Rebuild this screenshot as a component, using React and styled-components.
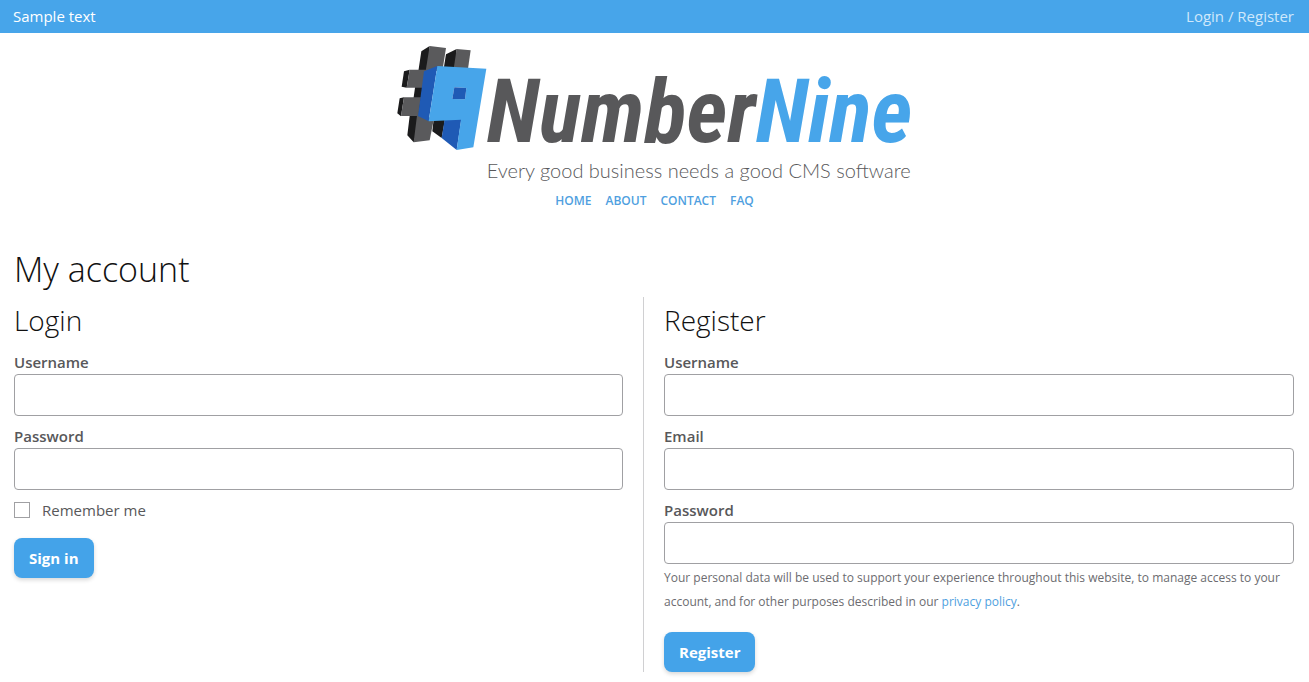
import React from "react";
import styled, { createGlobalStyle } from "styled-components";

const GlobalStyle = createGlobalStyle`
  *, *::before, *::after { box-sizing: border-box; }
  body {
    margin: 0;
    background: #fff;
    color: #58585a;
    font-family: "Open Sans", "Noto Sans", sans-serif;
    font-size: 15px;
    line-height: 24px;
  }
`;

const TopBar = styled.header`
  display: flex;
  justify-content: space-between;
  align-items: center;
  height: 33px;
  padding: 0 15px 2px 13px;
  background: #47a5ea;
  color: #fff;
`;

const AccountLink = styled.a`
  color: #cfe8fb;
  text-decoration: none;
`;

const Masthead = styled.div`
  display: flex;
  flex-direction: column;
  align-items: center;
  padding-top: 12px;
`;

const Logo = styled.a`
  display: flex;
  align-items: flex-start;
  color: #58585a;
  text-decoration: none;
`;

const LogoMark = styled.svg`
  width: 90px;
  height: 106px;
  flex: none;
`;

const LogoText = styled.span`
  display: flex;
  flex-direction: column;
  padding-top: 20px;
`;

const Wordmark = styled.span`
  font: italic 700 88px/94px "Roboto Condensed", "Liberation Sans Narrow", "Liberation Sans", sans-serif;
  white-space: nowrap;
`;

const Accent = styled.span`
  color: #47a5ea;
`;

const Tagline = styled.span`
  font-family: Lato, "Open Sans", sans-serif;
  font-size: 20px;
  line-height: 22px;
  font-weight: 300;
  white-space: nowrap;
`;

const Nav = styled.nav`
  display: flex;
  gap: 14px;
  margin-top: 8px;
`;

const NavLink = styled.a`
  color: #4f9fe0;
  font-size: 12px;
  line-height: 24px;
  font-weight: 600;
  text-transform: uppercase;
  text-decoration: none;
`;

const Main = styled.main`
  padding: 28px 15px 10px 14px;
`;

const PageTitle = styled.h1`
  margin: 0;
  color: #111;
  font-size: 34px;
  line-height: 56px;
  font-weight: 300;
`;

const Columns = styled.div`
  display: grid;
  grid-template-columns: minmax(0, 29fr) minmax(0, 31fr);
  column-gap: 20px;
`;

const Form = styled.form`
  padding-left: ${(p) => (p.$divided ? 20 : 0)}px;
  border-left: ${(p) => (p.$divided ? "1px solid #d0d0d2" : "0")};
`;

const FormTitle = styled.h2`
  margin: 0 0 7px;
  color: #111;
  font-size: 28px;
  line-height: 46px;
  font-weight: 300;
`;

const Field = styled.div`
  margin-bottom: ${(p) => (p.$tight ? 0 : 8)}px;
`;

const Label = styled.label`
  display: block;
  font-weight: 600;
`;

const Input = styled.input`
  display: block;
  width: 100%;
  height: 42px;
  padding: 8px 12px;
  border: 1px solid #a0a0a3;
  border-radius: 4px;
  background: #fff;
  font: inherit;
`;

const CheckLabel = styled.label`
  display: flex;
  align-items: center;
  gap: 12px;
  margin-bottom: 16px;
`;

const Checkbox = styled.input`
  appearance: none;
  width: 16px;
  height: 16px;
  margin: 0;
  border: 1px solid #a0a0a3;
  background: #fff;
  &:checked { background: #47a5ea; }
`;

const Note = styled.p`
  margin: 2px 0 18px;
  color: #6c6c70;
  font-size: 12px;
  line-height: 24px;
`;

const TextLink = styled.a`
  color: #4f9fe0;
  text-decoration: none;
`;

const Button = styled.button`
  display: block;
  height: 40px;
  padding: 0 15px;
  border: 0;
  border-radius: 8px;
  background: #44a3e9;
  box-shadow: 0 2px 4px rgba(0, 0, 0, 0.16);
  color: #fff;
  font: inherit;
  font-weight: 700;
`;

function HashNine() {
  return (
    <LogoMark viewBox="24 27 270 318" aria-hidden="true">
      <g fill="#1b1b1c">
        <path d="M122 30 97 46 88 106 78 155 74 184 62 240 55 298 74 319 110 200Z" />
        <path d="M203 39 171 55 164 98H200Z" />
        <path d="M62 101 45 106 38 152 53 155Z" />
        <path d="M45 184 32 187 25 232 36 241Z" />
        <path d="M134 250H168L158 306 130 286Z" />
      </g>
      <g fill="#5a5a5c">
        <path d="M122 30 171 36 160 105H110Z" />
        <path d="M203 39 245 43 236 105H193Z" />
        <path d="M62 101H112L101 155H53Z" />
        <path d="M45 184H96L88 240H36Z" />
        <path d="M84 238 90 225 134 252 122 313 74 319Z" />
      </g>
      <g fill="#1f5ab5">
        <path d="M145 90 105 106 87 240 119 256Z" />
        <path d="M167 250 217 249 203 342 158 306Z" />
      </g>
      <path
        fill="#47a5ea"
        fillRule="evenodd"
        d="M145 90 292 98 253 334 203 342 216 251 119 256ZM196 154 190 189 228 190 232 156Z"
      />
      <path fill="#1f5ab5" d="M196 154 232 156 228 190 190 189Z" />
    </LogoMark>
  );
}

function TextField({ id, label, type = "text", tight }) {
  return (
    <Field $tight={tight}>
      <Label htmlFor={id}>{label}</Label>
      <Input id={id} name={id} type={type} />
    </Field>
  );
}

export default function App() {
  return (
    <>
      <GlobalStyle />
      <TopBar>
        <span>Sample text</span>
        <AccountLink href="#account">Login / Register</AccountLink>
      </TopBar>
      <Masthead>
        <Logo href="#home">
          <HashNine />
          <LogoText>
            <Wordmark>Number<Accent>Nine</Accent></Wordmark>
            <Tagline>Every good business needs a good CMS software</Tagline>
          </LogoText>
        </Logo>
        <Nav>
          {["Home", "About", "Contact", "FAQ"].map((item) => (
            <NavLink key={item} href={`#${item.toLowerCase()}`}>{item}</NavLink>
          ))}
        </Nav>
      </Masthead>
      <Main>
        <PageTitle>My account</PageTitle>
        <Columns>
          <Form>
            <FormTitle>Login</FormTitle>
            <TextField id="login-username" label="Username" />
            <TextField id="login-password" label="Password" type="password" />
            <CheckLabel>
              <Checkbox type="checkbox" name="remember" />
              Remember me
            </CheckLabel>
            <Button type="button">Sign in</Button>
          </Form>
          <Form $divided>
            <FormTitle>Register</FormTitle>
            <TextField id="register-username" label="Username" />
            <TextField id="register-email" label="Email" type="email" />
            <TextField id="register-password" label="Password" type="password" tight />
            <Note>
              Your personal data will be used to support your experience throughout this website, to manage access to
              your account, and for other purposes described in our <TextLink href="#privacy">privacy policy</TextLink>.
            </Note>
            <Button type="button">Register</Button>
          </Form>
        </Columns>
      </Main>
    </>
  );
}
